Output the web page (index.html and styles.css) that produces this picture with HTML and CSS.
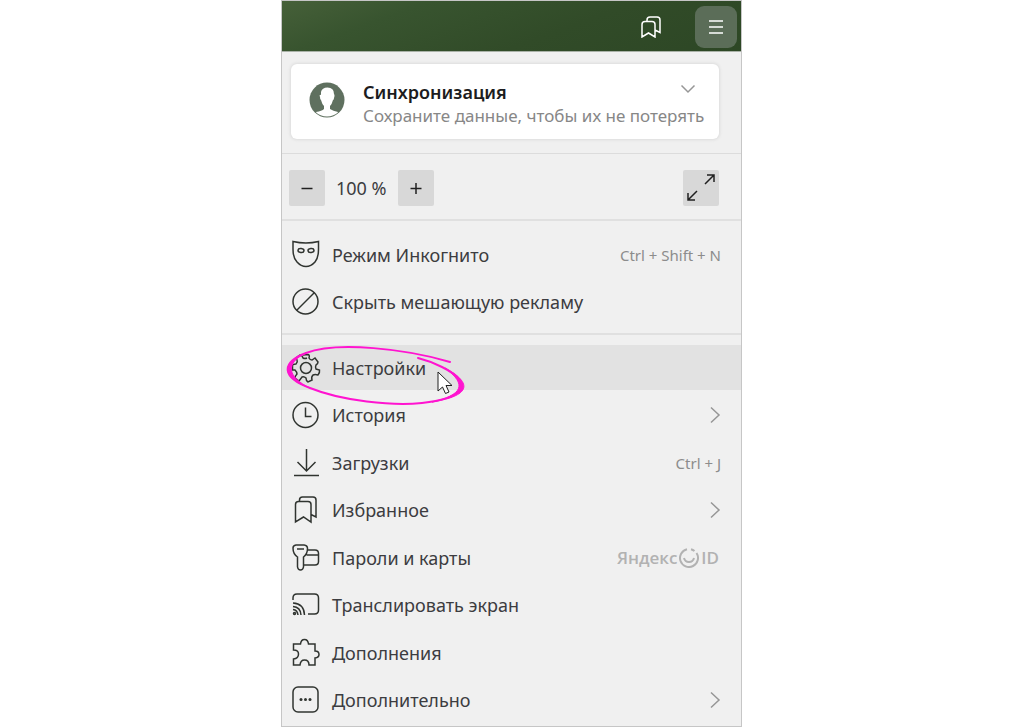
FILE: index.html
```html
<!DOCTYPE html>
<html lang="ru">
<head>
<meta charset="utf-8">
<title>Меню браузера</title>
<link rel="stylesheet" href="styles.css">
</head>
<body>
<main class="panel">
  <header class="toolbar">
    <button class="tool" type="button" aria-label="Закладки">
      <svg width="20" height="22" viewBox="0 0 20 22"><path d="M1 8.500Q1 5.500 4 5.500H11Q14 5.500 14 8.500V21L7.500 17L1 21Z M6 5.500V4Q6 1 9 1H16Q19 1 19 4V16.500L14 14"/></svg>
    </button>
    <button class="tool tool-active" type="button" aria-label="Меню">
      <svg width="16" height="16" viewBox="0 0 16 16"><path d="M1 2H15M1 8H15M1 14H15"/></svg>
    </button>
  </header>

  <section class="sync">
    <button class="card" type="button">
      <svg class="avatar" width="36" height="36" viewBox="0 0 36 36"><defs><clipPath id="face"><circle cx="18" cy="18" r="16.500"/></clipPath></defs><circle cx="18" cy="18" r="17.500" fill="#5f705f"/><g clip-path="url(#face)" fill="#fff"><path d="M12 10Q13 5.500 18.500 5.500Q25 5.500 25 12Q26 13 25 16Q25 18 24 18Q23 22 21 24V27Q24 29 29 30L34 36H2L7 30Q13 29 15 27V24Q13 22 12 18Q11 18 11 15Q10 12 12 13Z"/></g></svg>
      <span class="card-text"><strong class="card-title">Синхронизация</strong><span class="card-note">Сохраните данные, чтобы их не потерять</span></span>
      <svg class="chevron card-chevron" width="16" height="10" viewBox="0 0 16 10"><path d="M1.500 1.500L8 8L14.500 1.500"/></svg>
    </button>
  </section>

  <section class="zoom">
    <button class="square" type="button" aria-label="Уменьшить"><svg width="14" height="14" viewBox="0 0 14 14"><path d="M1.500 7.500H12.500"/></svg></button>
    <output class="zoom-value">100 %</output>
    <button class="square" type="button" aria-label="Увеличить"><svg width="14" height="14" viewBox="0 0 14 14"><path d="M1.500 7.500H12.500M7 2V13"/></svg></button>
    <button class="square square-end" type="button" aria-label="Во весь экран"><svg width="36" height="36" viewBox="0 0 36 36"><path d="M22 14L31 5M24 5H31V12M14 21L5 30M5 23V30H12"/></svg></button>
  </section>

  <nav class="group group-modes">
    <button class="row" type="button">
      <svg class="icon" width="30" height="30" viewBox="0 0 30 30"><path d="M2 1.500Q15 4.500 27.500 1.500V9Q27.500 18 24 22Q20 26.500 15 26.500Q10 26.500 6 22Q2 18 2 9Z"/><ellipse cx="10" cy="10.500" rx="3" ry="2" transform="rotate(8 10 10.500)"/><ellipse cx="20" cy="10.500" rx="3" ry="2" transform="rotate(-8 20 10.500)"/></svg>
      <span class="label">Режим Инкогнито</span><kbd class="keys">Ctrl + Shift + N</kbd>
    </button>
    <button class="row" type="button">
      <svg class="icon" width="30" height="30" viewBox="0 0 30 30"><circle cx="14.500" cy="14.500" r="12.500"/><path d="M5.500 23.500L23.500 5.500"/></svg>
      <span class="label">Скрыть мешающую рекламу</span>
    </button>
  </nav>

  <nav class="group group-main">
    <button class="row row-hover" type="button">
      <svg class="icon" width="30" height="30" viewBox="0 0 30 30"><circle cx="15" cy="15" r="5.500"/><path d="M12 2L17 1.500Q19 2 18 5Q19 7 21 7L24 5L27 9Q27 11 25 12Q24 14 25 16L28.500 17Q29 20 27 22Q24 21 22 22Q20 24 21 27L17 29Q15 28 15 25Q13 23 11 24L8 28L4 25Q4 23 6 21Q6 19 4 17L1.500 17V12Q3 11 5 11Q7 9 6 7L5 5L9 2Q11 2 12 5Q14 6 16 5"/></svg>
      <span class="label">Настройки</span>
      <svg class="marker" width="184" height="64" viewBox="0 0 184 64"><path class="marker-line" d="M168 17C125 4 55 -4 24 8C-2 18 0 33 28 43C60 56 110 61 140 58C176 54 198 41 160 22C152 18 144 15 136 13"/><path class="marker-fill" d="M24 8C-2 18 0 33 28 43C5 32 3 18 24 8ZM150 57C182 52 196 41 163 23C186 40 180 50 150 57Z"/></svg>
      <svg class="cursor" width="16" height="24" viewBox="0 0 16 24"><path d="M1 1V20L5.500 16L8.500 22.500L12 21L9 14.500H15Z"/></svg>
    </button>
    <button class="row" type="button">
      <svg class="icon" width="30" height="30" viewBox="0 0 30 30"><circle cx="14.500" cy="15" r="12.500"/><path d="M14.500 7.500V16.500H20.500"/></svg>
      <span class="label">История</span><svg class="chevron" width="12" height="18" viewBox="0 0 12 18"><path d="M2 1.500L10 9L2 16.500"/></svg>
    </button>
    <button class="row" type="button">
      <svg class="icon" width="30" height="30" viewBox="0 0 30 30"><path d="M15.500 1V23M6.500 14L15.500 23L24.500 14M3 27.500H28"/></svg>
      <span class="label">Загрузки</span><kbd class="keys">Ctrl + J</kbd>
    </button>
    <button class="row" type="button">
      <svg class="icon" width="30" height="30" viewBox="0 0 30 30"><path d="M4.500 9.500Q4.500 6.500 7.500 6.500H17Q20 6.500 20 9.500V27L12.500 22L4.500 27Z M8.500 6.500V5Q8.500 2 11.500 2H22Q25 2 25 5V22L20 19.500"/></svg>
      <span class="label">Избранное</span><svg class="chevron" width="12" height="18" viewBox="0 0 12 18"><path d="M2 1.500L10 9L2 16.500"/></svg>
    </button>
    <button class="row" type="button">
      <svg class="icon" width="30" height="30" viewBox="0 0 30 30"><path d="M5 2H13Q16.500 2.500 16.500 5.500Q16.500 11 12.500 14V24Q12 27 9.500 27Q7 27 6.500 24V14Q2 11 2 5Q2 2.500 5 2ZM6 6H13M16.500 7H24Q27.500 7 27.500 10.500V18.500Q27.500 22 24 22H12.500M15.500 12H27.500"/></svg>
      <span class="label">Пароли и карты</span>
      <span class="brand"><span>Яндекс</span><svg width="20" height="20" viewBox="0 0 20 20"><path d="M8 1.200A9 9 0 1 0 17.500 5M12 1.200A9 9 0 0 1 15.500 3M5 10Q6 14 10 14Q14 14 15 10"/></svg><span>ID</span></span>
    </button>
    <button class="row" type="button">
      <svg class="icon" width="30" height="30" viewBox="0 0 30 30"><path d="M2 10V8Q2 4 6 4H23.500Q27.500 4 27.500 8V20Q27.500 24 23.500 24H17M2 13Q13 13.500 13.500 25M2 16.500Q9.500 17 10 25M2 19.500Q6.500 20 7 25"/><circle cx="3.500" cy="23.500" r="1"/></svg>
      <span class="label">Транслировать экран</span>
    </button>
    <button class="row" type="button">
      <svg class="icon" width="30" height="30" viewBox="0 0 30 30"><path d="M2.500 6H9.500Q10 1.500 13.500 1.500Q17 1.500 17.500 6H24V13Q28 13 28 16.500Q28 19.500 24 20V27H18Q18 22 13.500 22Q9.500 22 9 27H2.500V21Q7.500 20.500 7.500 16Q7.500 12 2.500 12Z"/></svg>
      <span class="label">Дополнения</span>
    </button>
    <button class="row" type="button">
      <svg class="icon" width="30" height="30" viewBox="0 0 30 30"><rect x="2" y="2" width="25" height="25" rx="5"/><g class="dots"><circle cx="10" cy="14.500" r="1.500"/><circle cx="14.500" cy="14.500" r="1.500"/><circle cx="19" cy="14.500" r="1.500"/></g></svg>
      <span class="label">Дополнительно</span><svg class="chevron" width="12" height="18" viewBox="0 0 12 18"><path d="M2 1.500L10 9L2 16.500"/></svg>
    </button>
  </nav>
</main>
</body>
</html>
```
FILE: styles.css
```css
* { box-sizing: border-box; }

body {
  margin: 0;
  padding-right: 1px;
  background: #fff;
  font-family: "Noto Sans", "Open Sans", sans-serif;
  color: #3c3c40;
}

button {
  border: 0;
  padding: 0;
  background: none;
  font: inherit;
  color: inherit;
  text-align: left;
}

svg {
  flex: none;
  fill: none;
  stroke: currentColor;
}

.panel {
  display: flex;
  flex-direction: column;
  max-width: 461px;
  min-height: 100vh;
  margin: 0 auto;
  border: 1px solid #c6c6c6;
  background: #f0f0f0;
}

.toolbar {
  display: flex;
  align-items: center;
  justify-content: flex-end;
  gap: 34px;
  height: 51px;
  padding: 2px 4px 0 0;
  border-bottom: 1px solid #aab2a8;
  background: linear-gradient(160deg, #466039 0%, #38542f 25%, #314b28 60%, #2d4725 100%);
  color: #fff;
}

.tool {
  display: grid;
  place-items: center;
  height: 42px;
}

.tool-active {
  width: 42px;
  border-radius: 9px;
  background: #5b6d58;
}

.tool svg { stroke-width: 1.5; }

.sync {
  padding: 12px 22px 14px 9px;
  border-bottom: 1px solid #dcdcdc;
}

.card {
  display: flex;
  gap: 18px;
  width: 100%;
  height: 75px;
  padding: 16px 18px 0;
  border-radius: 6px;
  background: #fff;
  box-shadow: 0 0 3px 1px #dcdcdc;
}

.avatar {
  margin-top: 2px;
  stroke: none;
}

.card-text {
  flex: 1;
  display: flex;
  flex-direction: column;
  font-size: 17px;
  line-height: 24px;
  white-space: nowrap;
}

.card-title {
  font-size: 18px;
  font-weight: 600;
  color: #1c1c20;
}

.card-note { color: #878787; }

.chevron {
  color: #969696;
  stroke-width: 1.5;
}

.card-chevron {
  margin: 4px 12px 0 -42px;
}

.zoom {
  display: flex;
  align-items: center;
  gap: 11px;
  padding: 16px 22px 13px 7px;
  border-bottom: 2px solid #e0e0e0;
  font-size: 18px;
}

.square {
  display: grid;
  place-items: center;
  width: 36px;
  height: 36px;
  border-radius: 2px;
  background: #d8d8d8;
  color: #202020;
}

.square svg { stroke-width: 1.5; }
.square-end { margin-left: auto; }

.group {
  display: flex;
  flex-direction: column;
}

.group-modes {
  gap: 2px;
  padding: 11px 0 9px;
  border-bottom: 2px solid #e0e0e0;
}

.group-main {
  flex: 1;
  justify-content: space-between;
  padding: 10px 0 3px;
}

.row {
  position: relative;
  display: flex;
  align-items: center;
  gap: 11px;
  height: 45px;
  padding: 0 20px 0 9px;
  font-size: 18px;
  line-height: 24px;
}

.row-hover { background: #e2e2e2; }

.icon {
  color: #303430;
  stroke-width: 1.5;
}

.dots {
  fill: currentColor;
  stroke: none;
}

.label { flex: 1; }

.keys {
  font-family: inherit;
  font-size: 15px;
  color: #8c8c8c;
}

.brand {
  display: flex;
  align-items: center;
  gap: 2px;
  padding-right: 2px;
  font-family: "Open Sans", sans-serif;
  font-size: 17px;
  font-weight: 600;
  color: #b2b2b2;
}

.brand svg { stroke-width: 2; }

.marker {
  position: absolute;
  left: 0;
  top: 0;
  z-index: 1;
  stroke: #ff14d0;
}

.marker-line {
  stroke-width: 2;
  stroke-linecap: round;
}

.marker-fill {
  fill: #ff14d0;
}

.cursor {
  position: absolute;
  left: 155px;
  top: 26px;
  z-index: 2;
  fill: #fff;
  stroke: #202020;
}
```
